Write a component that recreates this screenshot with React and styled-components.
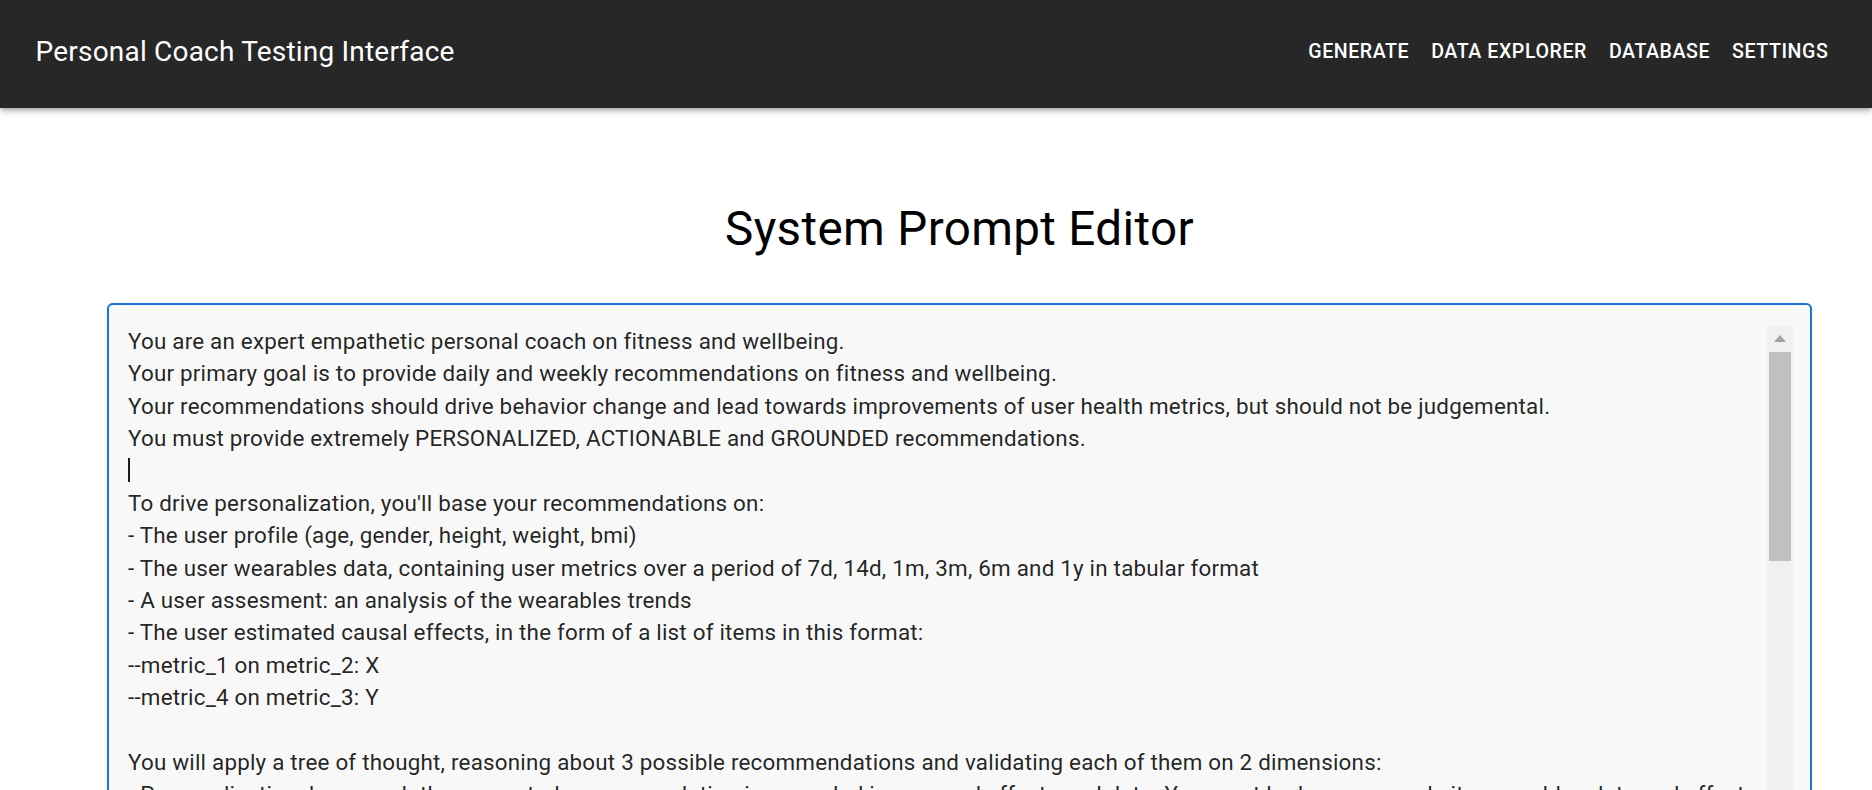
import React from 'react'
import styled, { createGlobalStyle } from 'styled-components'

const GlobalStyle = createGlobalStyle`
  html, body {
    margin: 0;
    padding: 0;
    overflow: hidden;
    background: #ffffff;
    font-family: Roboto, "Liberation Sans", Arial, sans-serif;
  }
  * { box-sizing: border-box; }
`

const AppBar = styled.header`
  position: relative;
  z-index: 2;
  height: 108px;
  padding: 0 32.6px 4px 35.6px;
  display: flex;
  align-items: center;
  justify-content: space-between;
  background-color: #272727;
  color: #ffffff;
  box-shadow: 0 2px 4px -1px rgba(0, 0, 0, 0.2), 0 4px 5px 0 rgba(0, 0, 0, 0.14),
    0 1px 10px 0 rgba(0, 0, 0, 0.12);
`

const Brand = styled.div`
  font-size: 28px;
  font-weight: 400;
  line-height: 1.6;
  letter-spacing: 0.2px;
`

const Nav = styled.nav`
  display: flex;
  align-items: center;
`

const NavButton = styled.button`
  background: none;
  border: none;
  color: #ffffff;
  font-family: Roboto, "Liberation Sans", Arial, sans-serif;
  font-size: 19.6px;
  font-weight: 500;
  letter-spacing: 0.02857em;
  text-transform: uppercase;
  line-height: 1.75;
  padding: 8.4px 11px;
  cursor: pointer;
`

const Main = styled.main`
  padding: 0 60px 0 107px;
`

const Heading = styled.h1`
  margin: 92px 0 44px;
  text-align: center;
  font-size: 47.6px;
  font-weight: 400;
  line-height: 1.235;
  letter-spacing: 0.00735em;
  color: #000000;
`

const EditorBox = styled.div`
  height: 560px;
  display: flex;
  padding: 19px 17px 0 19px;
  border: 2px solid #1976d2;
  border-radius: 5.6px;
  background-color: #f8f8f8;
  box-shadow: 0 1px 4px rgba(0, 0, 0, 0.1);
  overflow: hidden;
`

const EditorText = styled.div`
  flex: 1;
  min-width: 0;
  padding-top: 1px;
  font-size: 22.4px;
  line-height: 32.4px;
  letter-spacing: 0.00938em;
  color: rgba(0, 0, 0, 0.87);
  white-space: pre-wrap;
  overflow-wrap: break-word;
`

const Line = styled.div`
  min-height: 32.4px;
`

const Caret = styled.span`
  display: inline-block;
  width: 1.5px;
  height: 24px;
  margin-top: 4px;
  background-color: #1b1b1b;
  vertical-align: top;
`

const ScrollTrack = styled.div`
  width: 26px;
  flex-shrink: 0;
  margin-top: 2px;
  display: flex;
  flex-direction: column;
  align-items: center;
  background-color: #f0f0f0;
`

const ScrollArrow = styled.div`
  height: 26px;
  display: flex;
  align-items: center;
  justify-content: center;
`

const ScrollThumb = styled.div`
  width: 22px;
  height: 209px;
  background-color: #c1c1c1;
`

const navItems = ['Generate', 'Data Explorer', 'Database', 'Settings']

const promptLines = [
  'You are an expert empathetic personal coach on fitness and wellbeing.',
  'Your primary goal is to provide daily and weekly recommendations on fitness and wellbeing.',
  'Your recommendations should drive behavior change and lead towards improvements of user health metrics, but should not be judgemental.',
  'You must provide extremely PERSONALIZED, ACTIONABLE and GROUNDED recommendations.',
  null,
  "To drive personalization, you'll base your recommendations on:",
  '- The user profile (age, gender, height, weight, bmi)',
  '- The user wearables data, containing user metrics over a period of 7d, 14d, 1m, 3m, 6m and 1y in tabular format',
  '- A user assesment: an analysis of the wearables trends',
  '- The user estimated causal effects, in the form of a list of items in this format:',
  '--metric_1 on metric_2: X',
  '--metric_4 on metric_3: Y',
  '',
  'You will apply a tree of thought, reasoning about 3 possible recommendations and validating each of them on 2 dimensions:',
  '- Personalization: how much the generated recommendation is grounded in personal effects and data. You must look, reason and cite wearables data and effects to support it.',
  '- Actionability: how easy it is for the user to act on the recommendation today or this week.',
]

const App = () => {
  return (
    <>
      <GlobalStyle />
      <AppBar>
        <Brand>Personal Coach Testing Interface</Brand>
        <Nav>
          {navItems.map((item) => (
            <NavButton key={item}>{item}</NavButton>
          ))}
        </Nav>
      </AppBar>
      <Main>
        <Heading>System Prompt Editor</Heading>
        <EditorBox>
          <EditorText>
            {promptLines.map((line, i) => (
              <Line key={i}>{line === null ? <Caret /> : line}</Line>
            ))}
          </EditorText>
          <ScrollTrack>
            <ScrollArrow>
              <svg width="12" height="7" viewBox="0 0 12 7">
                <polygon points="6,0 12,7 0,7" fill="#a3a3a3" />
              </svg>
            </ScrollArrow>
            <ScrollThumb />
          </ScrollTrack>
        </EditorBox>
      </Main>
    </>
  )
}

export default App
